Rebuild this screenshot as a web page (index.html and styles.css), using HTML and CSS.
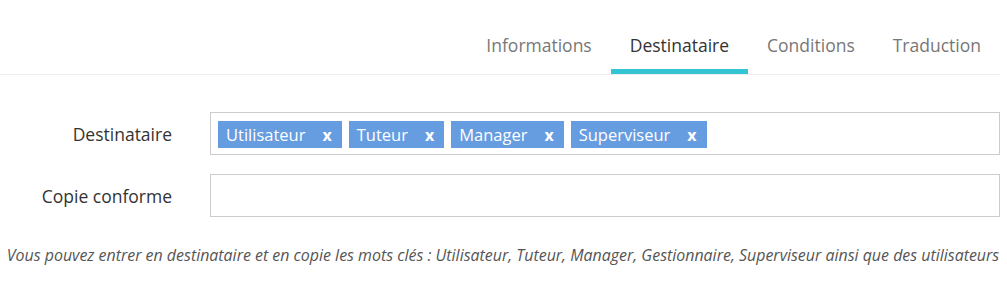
FILE: index.html
```html
<!DOCTYPE html>
<html lang="fr">
<head>
  <meta charset="UTF-8">
  <meta name="viewport" content="width=device-width, initial-scale=1.0">
  <title>Destinataire</title>
  <link rel="stylesheet" href="styles.css">
</head>
<body>
  <div class="page">
    <!-- Onglets -->
    <nav class="tabs">
      <a href="#" class="tab">Informations</a>
      <a href="#" class="tab active">Destinataire</a>
      <a href="#" class="tab">Conditions</a>
      <a href="#" class="tab">Traduction</a>
    </nav>

    <form class="form">
      <div class="row">
        <label class="label">Destinataire</label>
        <div class="field">
          <span class="tag">Utilisateur <b class="remove">x</b></span>
          <span class="tag">Tuteur <b class="remove">x</b></span>
          <span class="tag">Manager <b class="remove">x</b></span>
          <span class="tag">Superviseur <b class="remove">x</b></span>
        </div>
      </div>
      <div class="row">
        <label class="label">Copie conforme</label>
        <div class="field"></div>
      </div>
    </form>

    <p class="help">Vous pouvez entrer en destinataire et en copie les mots clés : Utilisateur, Tuteur, Manager, Gestionnaire, Superviseur ainsi que des utilisateurs</p>
  </div>
</body>
</html>
```

FILE: styles.css
```css
* {
  margin: 0;
  padding: 0;
  box-sizing: border-box;
}

body {
  font-family: 'Open Sans', sans-serif;
  background: #ffffff;
  color: #333;
}

.page {
  width: 1000px;
}

.tabs {
  display: flex;
  justify-content: flex-end;
  border-bottom: 1px solid #ececf0;
}

.tab {
  display: block;
  padding: 33px 19px 12px;
  font-size: 17.5px;
  line-height: 24px;
  color: #777;
  text-decoration: none;
  border-bottom: 5px solid transparent;
}

.tab.active {
  color: #333;
  border-bottom-color: #35c4d2;
}

.form {
  margin-top: 37px;
  display: flex;
  flex-direction: column;
  gap: 19px;
}

.row {
  display: grid;
  grid-template-columns: 172px 1fr;
  column-gap: 38px;
  align-items: center;
}

.label {
  text-align: right;
  font-size: 17.5px;
  color: #333;
}

.field {
  height: 43px;
  border: 1px solid #ccc;
  padding: 8px 7px;
  display: flex;
  gap: 7px;
  align-items: flex-start;
}

.tag {
  display: flex;
  align-items: center;
  gap: 17px;
  height: 27px;
  padding: 0 10px 0 8px;
  background: #669ce0;
  color: #fff;
  font-size: 16.5px;
}

.remove {
  font-weight: 700;
  font-size: 16px;
}

.help {
  margin-top: 27px;
  padding-left: 6px;
  text-align: center;
  font-size: 15.95px;
  line-height: 22px;
  font-style: italic;
  color: #555;
}
```
